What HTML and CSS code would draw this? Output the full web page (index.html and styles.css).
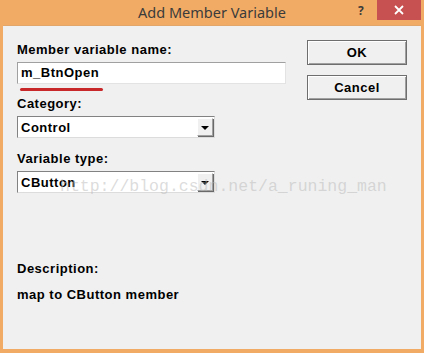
FILE: index.html
```html
<!DOCTYPE html>
<html lang="en">
<head>
    <meta charset="UTF-8">
    <title>Add Member Variable</title>
    <link rel="stylesheet" href="styles.css">
</head>
<body>
    <div class="window">
        <div class="titlebar">
            <span class="title">Add Member Variable</span>
            <span class="help">?</span>
            <span class="close">
                <svg width="10" height="10" viewBox="0 0 10 10">
                    <path d="M1 1 L9 9 M9 1 L1 9" stroke="#fff" stroke-width="1.8"/>
                </svg>
            </span>
        </div>
        <div class="client">
            <div class="form">
                <div class="label first">Member variable name:</div>
                <div class="edit">m_BtnOpen</div>
                <div class="mark"></div>
                <div class="label cat">Category:</div>
                <div class="combo">
                    <span class="value">Control</span>
                    <span class="drop"><i></i></span>
                </div>
                <div class="label type">Variable type:</div>
                <div class="combo">
                    <span class="value">CButton</span>
                    <span class="drop"><i></i></span>
                </div>
                <div class="label desc">Description:</div>
                <div class="label note">map to CButton member</div>
            </div>
            <div class="actions">
                <button class="btn">OK</button>
                <button class="btn">Cancel</button>
            </div>
            <div class="watermark">http://blog.csdn.net/a_runing_man</div>
        </div>
    </div>
</body>
</html>
```

FILE: styles.css
```css
body {
    margin: 0;
    background: #f1ab65;
    font-family: 'Liberation Sans', Arial, sans-serif;
}

.window {
    width: 424px;
    height: 353px;
    background: #f1ab65;
    display: flex;
    flex-direction: column;
}

.titlebar {
    height: 25px;
    position: relative;
    display: flex;
    justify-content: center;
    align-items: center;
}

.title {
    font-family: 'Noto Sans', sans-serif;
    font-size: 14.5px;
    color: #3b3b3b;
    margin-top: -1px;
}

.help {
    position: absolute;
    left: 358px;
    top: 2px;
    font-family: 'Noto Sans', sans-serif;
    font-weight: bold;
    font-size: 12px;
    color: #3b3b3b;
}

.close {
    position: absolute;
    left: 377px;
    top: 0;
    width: 44px;
    height: 20px;
    background: #c75050;
    display: flex;
    justify-content: center;
    align-items: center;
}

.client {
    position: relative;
    flex: 1;
    margin: 0 3px 4px 3px;
    background: #f0f0f0;
    border-top: 1px solid #e3a66a;
    display: flex;
    padding: 16px 0 0 14px;
}

.form {
    width: 269px;
}

.label {
    font-size: 13px;
    font-weight: bold;
    letter-spacing: 0.5px;
    line-height: 15px;
    color: #000;
}

.edit {
    margin-top: 5px;
    height: 22px;
    box-sizing: border-box;
    border: 1px solid #a0a0a0;
    border-right-color: #e3e3e3;
    border-bottom-color: #e3e3e3;
    background: #fff;
    font-size: 13px;
    font-weight: bold;
    letter-spacing: 0.5px;
    line-height: 20px;
    padding-left: 3px;
}

.mark {
    width: 83px;
    height: 3px;
    margin: 4px 0 0 3px;
    background: #c8282a;
    border-radius: 2px;
}

.label.cat { margin-top: 5px; }
.label.type { margin-top: 13px; }
.label.desc { margin-top: 68px; }
.label.note { margin-top: 11px; }

.combo {
    margin-top: 5px;
    width: 198px;
    height: 22px;
    box-sizing: border-box;
    border: 1px solid #828282;
    border-right-color: #dcdcdc;
    border-bottom-color: #dcdcdc;
    background: #fff;
    display: flex;
    align-items: center;
    justify-content: space-between;
}

.value {
    font-size: 13px;
    font-weight: bold;
    letter-spacing: 0.5px;
    padding-left: 3px;
}

.drop {
    width: 16px;
    height: 18px;
    margin-right: 1px;
    box-sizing: border-box;
    background: #f0f0f0;
    border: 1px solid #a0a0a0;
    border-top-color: #ffffff;
    border-left-color: #ffffff;
    box-shadow: 1px 1px 0 #696969;
    display: flex;
    justify-content: center;
    align-items: center;
}

.drop i {
    width: 0;
    height: 0;
    border-left: 4px solid transparent;
    border-right: 4px solid transparent;
    border-top: 4px solid #000;
    margin-top: 1px;
}

.actions {
    margin-top: -2px;
    margin-left: 21px;
    display: flex;
    flex-direction: column;
    gap: 10px;
}

.btn {
    width: 100px;
    height: 25px;
    margin: 0;
    padding: 0;
    background: #f0f0f0;
    border: 1px solid #6e6e6e;
    box-shadow: inset 1px 1px 0 #ffffff, inset -1px -1px 0 #a0a0a0;
    font-family: 'Liberation Sans', Arial, sans-serif;
    font-size: 13px;
    font-weight: bold;
    letter-spacing: 0.5px;
    color: #000;
}

.watermark {
    position: absolute;
    left: 57px;
    top: 151px;
    font-family: 'Liberation Mono', monospace;
    font-size: 16.5px;
    color: rgba(185, 185, 185, 0.5);
    pointer-events: none;
}
```
